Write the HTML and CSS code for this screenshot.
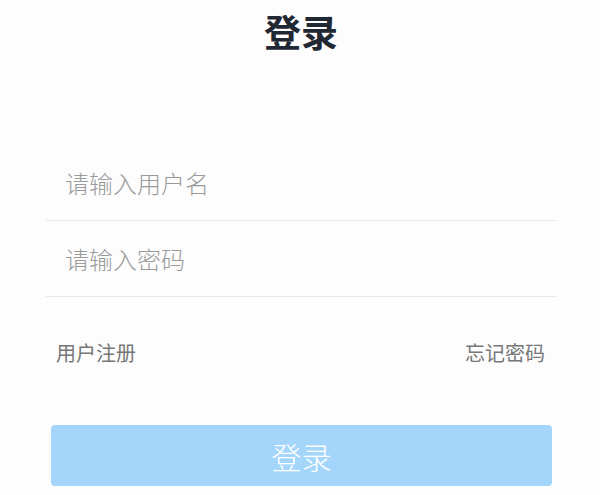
FILE: index.html
```html
<!DOCTYPE html>
<html lang="zh-CN">
<head>
<meta charset="utf-8">
<title>登录</title>
<link rel="stylesheet" href="styles.css">
</head>
<body>
<div class="page">
  <header class="header"><h1 class="title">登录</h1></header>
  <form class="form">
    <div class="field"><input class="input" type="text" placeholder="请输入用户名"></div>
    <div class="field"><input class="input" type="password" placeholder="请输入密码"></div>
    <div class="links">
      <span class="link">用户注册</span>
      <span class="link">忘记密码</span>
    </div>
    <button type="button" class="submit">登录</button>
  </form>
</div>
</body>
</html>
```
FILE: styles.css
```css
html, body {
  margin: 0;
  padding: 0;
  background: #fdfdfd;
}
body {
  font-family: "Noto Sans CJK SC", "Noto Sans", sans-serif;
}
.page {
  width: 600px;
  height: 495px;
  overflow: hidden;
}
.header {
  height: 62px;
  display: flex;
  align-items: center;
  justify-content: center;
}
.title {
  margin: 0;
  padding-left: 2px;
  font-size: 37px;
  line-height: 44px;
  font-weight: 700;
  color: #1f2833;
}
.form {
  margin: 83px 43px 0 46px;
  display: flex;
  flex-direction: column;
}
.field {
  height: 76px;
  box-sizing: border-box;
  border-bottom: 1px solid #e9e9e9;
  display: flex;
  align-items: center;
}
.input {
  width: 100%;
  border: none;
  outline: none;
  background: transparent;
  padding: 0 0 0 19px;
  font-family: inherit;
  font-size: 24px;
  font-weight: 300;
  line-height: 32px;
  color: #333;
}
.input::placeholder {
  color: #9a9a9a;
}
.links {
  margin-top: 42px;
  padding: 0 12px 0 10px;
  display: flex;
  justify-content: space-between;
  font-size: 20px;
  line-height: 28px;
  color: #777;
}
.submit {
  margin: 58px 5px 0 5px;
  height: 61px;
  border: none;
  border-radius: 4px;
  background: #a3d6fa;
  color: #ffffff;
  font-family: inherit;
  font-size: 30px;
  font-weight: 300;
  line-height: 40px;
  padding: 0;
}
```
